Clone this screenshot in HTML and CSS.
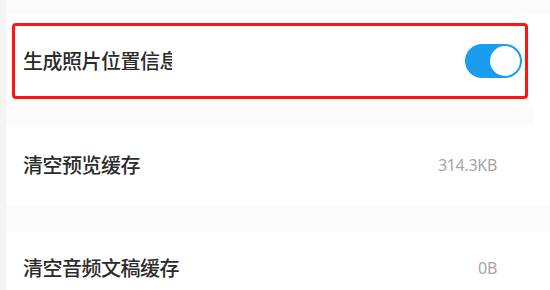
FILE: index.html
```html
<!DOCTYPE html>
<html lang="zh">
<head>
<meta charset="utf-8">
<link rel="stylesheet" href="styles.css">
</head>
<body>
<div class="page">
  <div class="band band-top"></div>
  <section class="row row-first">
    <div class="highlight">
      <span class="label label-clip">生成照片位置信息</span>
      <span class="toggle"><span class="knob"></span></span>
    </div>
  </section>
  <div class="band band-mid"></div>
  <section class="row row-second">
    <span class="label">清空预览缓存</span>
    <span class="value">314.3KB</span>
  </section>
  <div class="band band-mid2"></div>
  <section class="row row-third">
    <span class="label">清空音频文稿缓存</span>
    <span class="value">0B</span>
  </section>
</div>
</body>
</html>
```
FILE: styles.css
```css
html, body {
  margin: 0;
  padding: 0;
  background: #ffffff;
}
body {
  width: 550px;
  height: 290px;
  overflow: hidden;
  font-family: "Noto Sans CJK SC", "Noto Sans", sans-serif;
}
.page {
  border-left: 6px solid #f4f4f4;
  display: flex;
  flex-direction: column;
  height: 290px;
}
.band {
  background: #fbfbfb;
}
.band-top { height: 14px; }
.band-mid { height: 20px; margin-right: 16px; }
.band-mid2 { height: 27px; }
.row {
  background: #ffffff;
  display: flex;
  align-items: center;
  justify-content: space-between;
  box-sizing: border-box;
}
.row-first {
  height: 91px;
  align-items: flex-start;
  padding-top: 9px;
}
.highlight {
  margin-left: 6px;
  width: 516px;
  height: 76px;
  box-sizing: border-box;
  border: 3px solid #ff1414;
  border-radius: 4px;
  display: flex;
  align-items: center;
  justify-content: space-between;
  padding: 0 3px 0 8px;
}
.label {
  font-size: 20px;
  font-weight: 500;
  color: #2b2b2b;
  letter-spacing: -0.5px;
  white-space: nowrap;
  line-height: 1;
}
.label-clip {
  width: 149px;
  overflow: hidden;
  display: block;
}
.row-second {
  height: 80px;
  padding: 0 53px 0 17px;
}
.row-third {
  height: 58px;
  padding: 14px 53px 0 17px;
}
.value {
  font-size: 16px;
  color: #a6a6a6;
  font-family: "Noto Sans", sans-serif;
  letter-spacing: -0.3px;
}
.toggle {
  width: 57px;
  height: 34px;
  border-radius: 17px;
  background: #1a9cf0;
  display: flex;
  align-items: center;
  justify-content: flex-end;
  padding-right: 2px;
  box-sizing: border-box;
}
.knob {
  width: 30px;
  height: 30px;
  border-radius: 50%;
  background: #ffffff;
}
```
